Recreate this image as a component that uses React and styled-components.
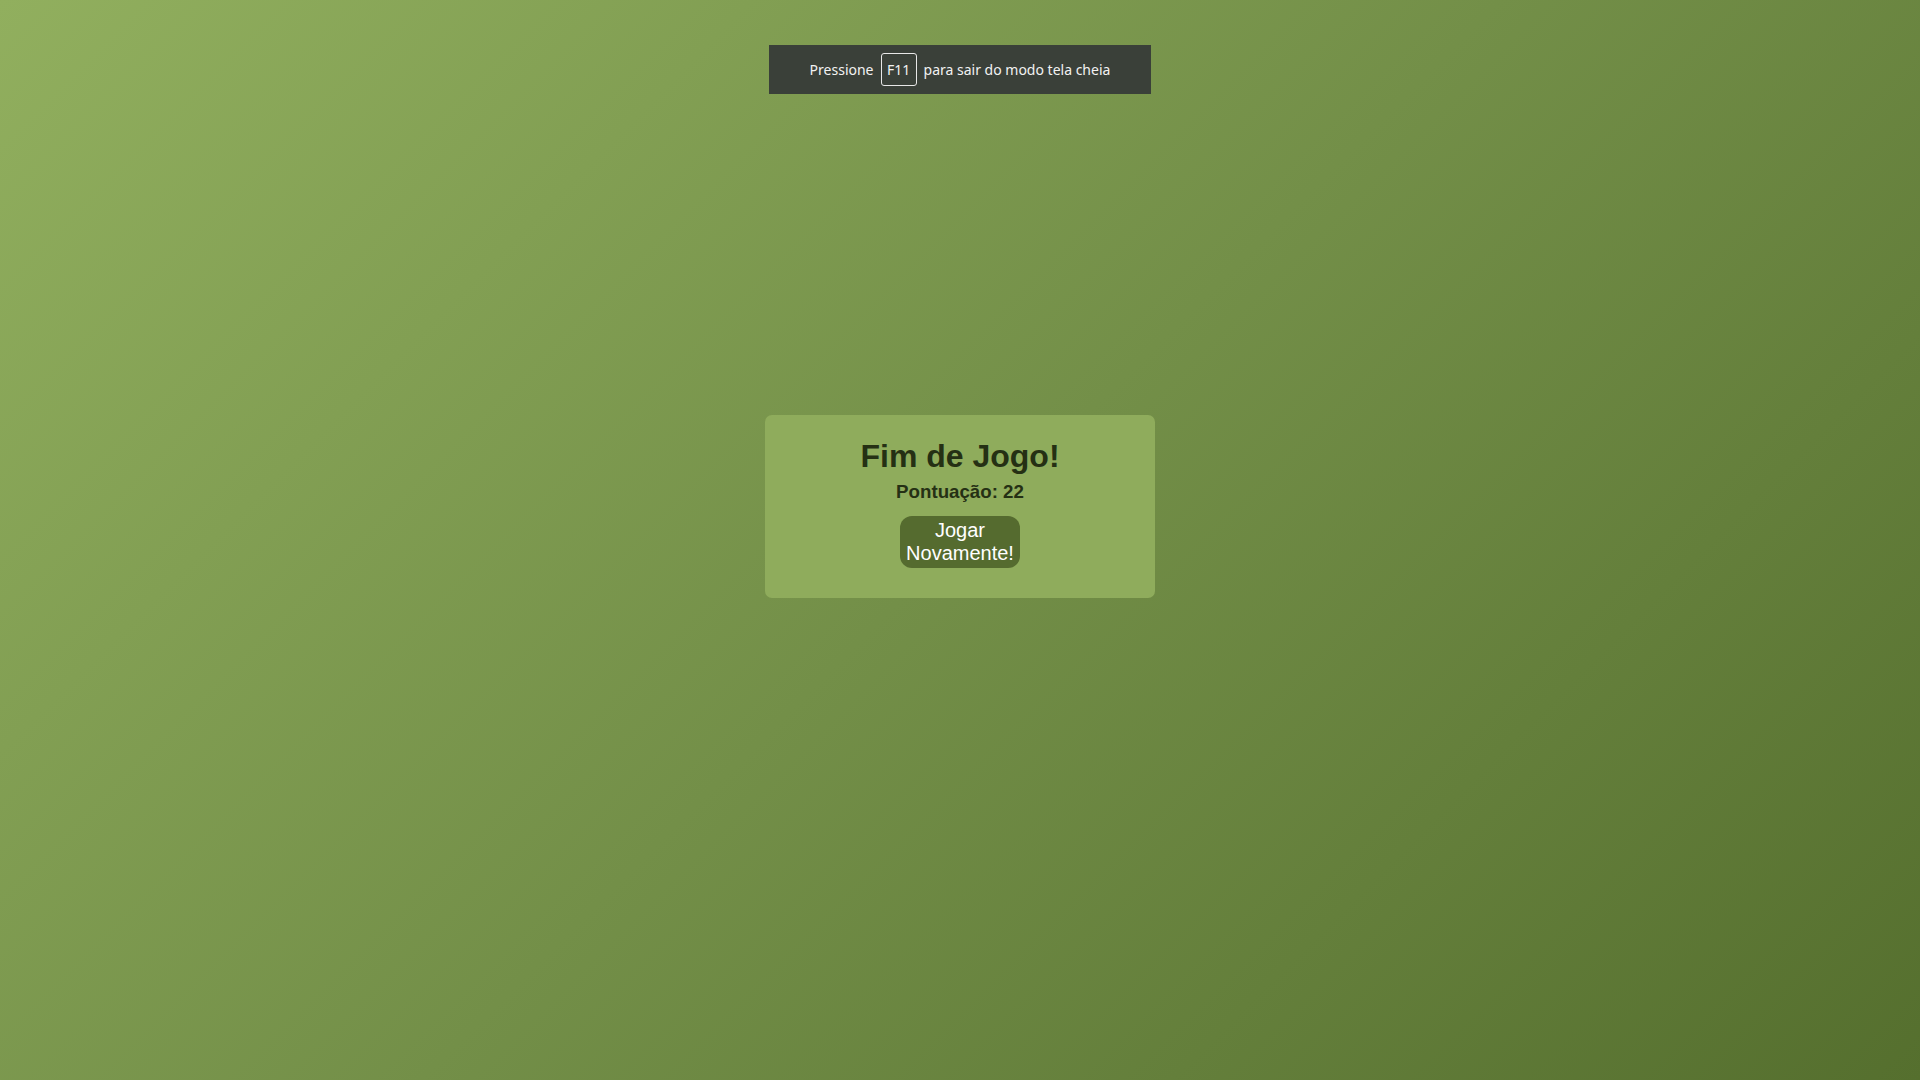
import styled, { createGlobalStyle } from "styled-components";

const GlobalStyle = createGlobalStyle`
  html, body {
    margin: 0;
    padding: 0;
    height: 100%;
  }
  body {
    font-family: "Liberation Sans", Arial, sans-serif;
  }
`;

const Screen = styled.div`
  position: relative;
  width: 100vw;
  height: 100vh;
  background: linear-gradient(135deg, #91af5e 0%, #738f48 50%, #556f2e 100%);
  display: flex;
  flex-direction: column;
  align-items: center;
  padding-top: 415px;
  box-sizing: border-box;
  overflow: hidden;
`;

const FullscreenNotice = styled.div`
  position: absolute;
  top: 45px;
  left: 769px;
  width: 382px;
  height: 49px;
  background: #3a4039;
  color: #f2f2f2;
  font-family: "Noto Sans", "Open Sans", sans-serif;
  font-size: 14px;
  display: flex;
  align-items: center;
  justify-content: center;
  gap: 7px;
`;

const Key = styled.span`
  display: inline-flex;
  align-items: center;
  justify-content: center;
  width: 34px;
  height: 31px;
  border: 1px solid #e8e8e8;
  border-radius: 3px;
`;

const Card = styled.div`
  width: 390px;
  height: 183px;
  box-sizing: border-box;
  background: #8fac5c;
  border-radius: 7px;
  display: flex;
  flex-direction: column;
  align-items: center;
  padding-top: 23px;
`;

const Title = styled.h1`
  margin: 0;
  font-size: 32px;
  font-weight: bold;
  color: #253014;
`;

const Score = styled.h3`
  margin: 6px 0 0;
  font-size: 18.72px;
  font-weight: bold;
  color: #253014;
`;

const PlayAgain = styled.button`
  margin-top: 13px;
  width: 120px;
  padding: 3px 6px;
  border: none;
  border-radius: 12px;
  background: #556b2f;
  color: #ffffff;
  font-family: "Liberation Sans", Arial, sans-serif;
  font-size: 20px;
  line-height: 23px;
  cursor: pointer;
`;

export default function App() {
  return (
    <>
      <GlobalStyle />
      <Screen>
        <FullscreenNotice>
          <span>Pressione</span>
          <Key>F11</Key>
          <span>para sair do modo tela cheia</span>
        </FullscreenNotice>
        <Card>
          <Title>Fim de Jogo!</Title>
          <Score>Pontuação: 22</Score>
          <PlayAgain>Jogar Novamente!</PlayAgain>
        </Card>
      </Screen>
    </>
  );
}
